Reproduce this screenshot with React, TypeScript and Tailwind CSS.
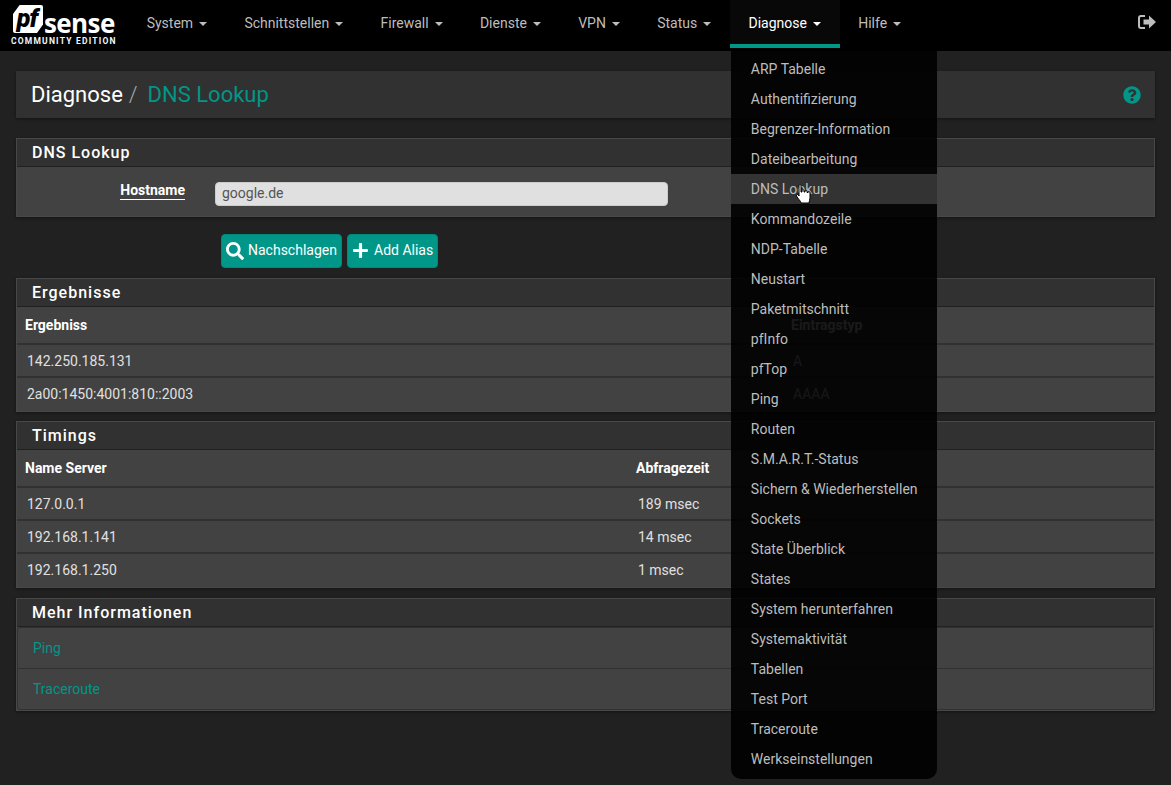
import React from "react";
import { FaSearch, FaPlus, FaQuestionCircle } from "react-icons/fa";

const nav = ["System", "Schnittstellen", "Firewall", "Dienste", "VPN", "Status", "Diagnose", "Hilfe"];
const menu = ["ARP Tabelle", "Authentifizierung", "Begrenzer-Information", "Dateibearbeitung", "DNS Lookup", "Kommandozeile", "NDP-Tabelle", "Neustart", "Paketmitschnitt", "pfInfo", "pfTop", "Ping", "Routen", "S.M.A.R.T.-Status", "Sichern & Wiederherstellen", "Sockets", "State Überblick", "States", "System herunterfahren", "Systemaktivität", "Tabellen", "Test Port", "Traceroute", "Werkseinstellungen"];

function Caret() {
  return <span className="inline-block ml-[6px] align-middle w-0 h-0 border-x-[4px] border-x-transparent border-t-[4px] border-t-current" />;
}

function Logo() {
  return (
    <div className="w-[106px] ml-[11px] mr-[11px] mt-[5px] shrink-0 relative h-[41px]">
      <div className="absolute left-[2px] top-0 w-[30px] h-[28px] bg-white rounded-[2px] [clip-path:polygon(22%_0,100%_0,100%_70%,80%_100%,0_100%,0_32%)] flex items-center justify-center">
        <span className="text-black italic font-black text-[25px] leading-[26px] font-['Roboto',sans-serif] tracking-[-1px] -ml-[2px]">pf</span>
      </div>
      <span className="absolute left-[33px] top-[6px] text-white font-bold text-[26px] leading-[24px] font-['Open_Sans',sans-serif] tracking-[-0.6px]">sense</span>
      <span className="absolute left-0 top-[31px] text-[#eef6ff] font-bold text-[8.5px] leading-[10px] tracking-[1.2px] whitespace-nowrap font-['Roboto',sans-serif]">COMMUNITY EDITION</span>
    </div>
  );
}

function Panel({ title, children }: { title: string; children: React.ReactNode }) {
  return (
    <section className="border border-[#484848] bg-[#424242] shadow-[0_1px_3px_rgba(0,0,0,0.4)]">
      <h2 className="bg-[#313131] border-b border-[#212121] h-[28px] pl-[15px] text-white font-medium text-[16px] leading-[27px] tracking-[1px]">{title}</h2>
      {children}
    </section>
  );
}

function Row({ cols, a, b, head }: { cols: string; a: string; b: string; head?: boolean }) {
  return (
    <div className={`grid ${cols} border-b-2 border-[#313131] last:border-b-0 ${head ? "h-[38px] font-bold text-white text-[14px] leading-[36px] pl-[8px]" : "h-[33px] text-[#e0e0e0] text-[14px] leading-[32px] pl-[10px]"}`}>
      <span>{a}</span>
      <span>{b}</span>
    </div>
  );
}

export default function App() {
  return (
    <div className="relative min-h-[785px] bg-[#212121] font-['Roboto',sans-serif] overflow-hidden">
      <header className="h-[51px] bg-black flex items-start">
        <Logo />
        <nav className="flex text-[14px] leading-[20px] text-[#bdbdbd]">
          {nav.map((n) => (
            <div key={n} className={n === "Diagnose" ? "relative h-[48px] pt-[13px] px-[18.65px] bg-[#080808] text-white border-b-[4px] border-[#009688]" : "h-[48px] pt-[13px] px-[18.65px]"}>
              {n}
              <Caret />
              {n === "Diagnose" && (
                <div className="absolute left-[1px] top-[48px] w-[206px] pt-[6px] pb-[5px] bg-black/90 rounded-b-[10px] z-10">
                  {menu.map((m) => (
                    <div key={m} className={`h-[30px] pl-[20px] leading-[30px] text-[#bdbdbd] whitespace-nowrap ${m === "DNS Lookup" ? "bg-[#333333]" : ""}`}>{m}</div>
                  ))}
                </div>
              )}
            </div>
          ))}
        </nav>
        <svg className="ml-auto mr-[15px] mt-[15px]" width="18" height="14" viewBox="0 0 18 14">
          <path d="M7 1H3Q1 1 1 3V11Q1 13 3 13H7" fill="none" stroke="#bdbdbd" strokeWidth="2" />
          <path d="M5.5 4.5H11V0.5L18 7L11 13.5V9.5H5.5Z" fill="#bdbdbd" />
        </svg>
      </header>

      <main className="px-[16px] pt-[20px] flex flex-col">
        <div className="h-[47px] bg-[#313131] flex items-center pl-[15px] pr-[14px] text-[22px] shadow-[0_1px_3px_rgba(0,0,0,0.4)]">
          <span className="text-white">Diagnose</span>
          <span className="text-[#a8a8a8] ml-[6px] mr-[10px] font-light">/</span>
          <span className="text-[#009688]">DNS Lookup</span>
          <FaQuestionCircle className="ml-auto text-[#009688] text-[18px]" />
        </div>

        <div className="mt-[20px]">
          <Panel title="DNS Lookup">
            <div className="h-[49px] flex items-start pt-[15px]">
              <span className="w-[168px] text-right text-white font-bold text-[14px] leading-[17px]"><span className="border-b border-white inline-block">Hostname</span></span>
              <div className="ml-[30px] w-[453px] h-[24px] bg-[#e0e0e0] rounded-[4px] border border-[#cccccc] text-[#555555] text-[14px] leading-[20px] pl-[6px]">google.de</div>
            </div>
          </Panel>
        </div>

        <div className="mt-[17px] ml-[205px] flex gap-[5px] h-[34px]">
          <button className="w-[121px] flex items-center bg-[#009688] rounded-[4px] border border-[#00897b] text-white text-[14px] pl-[4px] pb-[1px] gap-[4px]"><FaSearch className="text-[18px]" />Nachschlagen</button>
          <button className="w-[91px] flex items-center bg-[#009688] rounded-[4px] border border-[#00897b] text-white text-[14px] pl-[4px] pb-[1px] gap-[5px]"><FaPlus className="text-[17px]" />Add Alias</button>
        </div>

        <div className="mt-[10px]">
          <Panel title="Ergebnisse">
            <Row head cols="grid-cols-[766px_1fr]" a="Ergebniss" b="Eintragstyp" />
            <Row cols="grid-cols-[766px_1fr]" a="142.250.185.131" b="A" />
            <Row cols="grid-cols-[766px_1fr]" a="2a00:1450:4001:810::2003" b="AAAA" />
          </Panel>
        </div>

        <div className="mt-[9px]">
          <Panel title="Timings">
            <Row head cols="grid-cols-[611px_1fr]" a="Name Server" b="Abfragezeit" />
            <Row cols="grid-cols-[611px_1fr]" a="127.0.0.1" b="189 msec" />
            <Row cols="grid-cols-[611px_1fr]" a="192.168.1.141" b="14 msec" />
            <Row cols="grid-cols-[611px_1fr]" a="192.168.1.250" b="1 msec" />
          </Panel>
        </div>

        <div className="mt-[10px]">
          <Panel title="Mehr Informationen">
            <div className="border border-[#313131] rounded-[3px] text-[14px] text-[#009688] h-[83px]">
              <div className="h-[41px] pl-[15px] leading-[40px] border-b border-[#313131]">Ping</div>
              <div className="h-[41px] pl-[15px] leading-[40px]">Traceroute</div>
            </div>
          </Panel>
        </div>
      </main>

      <svg className="absolute left-[795px] top-[184px] z-20" width="17" height="21" viewBox="0 0 17 21">
        <path d="M4 1.5 C4 .5 6 .5 6 1.5 V8 L7 8 V6.5 C7 5.5 9 5.5 9 6.5 V8 L10 8 V7 C10 6 12 6 12 7 V8.5 L13 8.5 C13 7.5 15 7.5 15 8.5 V14 C15 16 14 17 14 19 H6 C6 17 3 15 1.5 12 C1 10.5 2.5 10 3.5 11 L4 12 Z" fill="#fff" stroke="#000" strokeWidth="1" />
      </svg>
    </div>
  );
}
